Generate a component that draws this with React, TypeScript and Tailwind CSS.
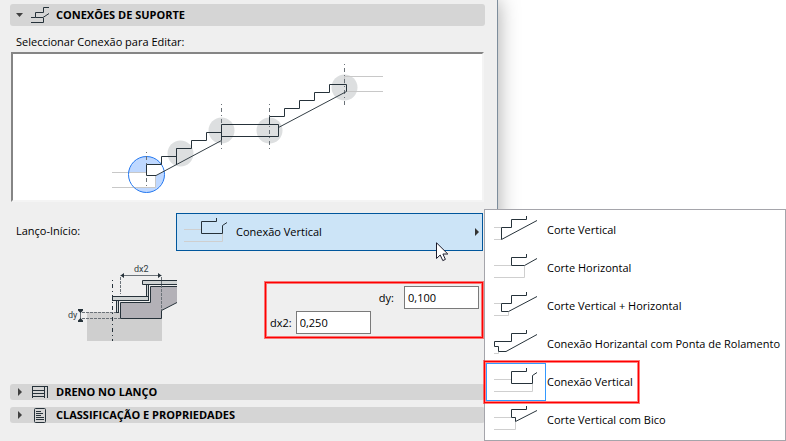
import React, { useState } from "react";

type Connection = {
  id: string;
  label: string;
  line: string;
  slab: string;
};

// Desenhos das conexões, todos numa grelha de 60x38
const connections: Connection[] = [
  {
    id: "vertical-cut",
    label: "Corte Vertical",
    line: "M40.5 5V8.5H25.5V16.5H15.5V28.5L51 9.5",
    slab: "M8 16.5H15M8 28.5H15",
  },
  {
    id: "horizontal-cut",
    label: "Corte Horizontal",
    line: "M40.5 5V8.5H25.5V16.5H38.5L51 9.5",
    slab: "M8 16.5H25M8 28.5H38.5V17",
  },
  {
    id: "vertical-horizontal-cut",
    label: "Corte Vertical + Horizontal",
    line: "M40.5 5V8.5H25.5V16.5H15.5V24.5H22.5L51 9.5",
    slab: "M8 16.5H15M8 28.5H22.5V25",
  },
  {
    id: "horizontal-nosing",
    label: "Conexão Horizantal com Ponta de Rolamento",
    line: "M40.5 5V8.5H25.5V16.5H8.5V21.5H12.5V26.5H20L51 9.5",
    slab: "M8 28.5H12.5V27",
  },
  {
    id: "vertical-connection",
    label: "Conexão Vertical",
    line: "M40.5 5V8.5H25.5V20.5H46.5V12.5L51 9.5",
    slab: "M8 16.5H25M8 28.5H46.5V21",
  },
  {
    id: "vertical-cut-nosing",
    label: "Corte Vertical com Bico",
    line: "M40.5 5V8.5H25.5V16.5H29.5V20.5L51 9.5",
    slab: "M8 16.5H25M8 28.5H29.5V21",
  },
];

const ConnectionIcon: React.FC<{ item: Connection }> = ({ item }) => (
  <svg width="60" height="38" viewBox="0 0 60 38" fill="none" className="shrink-0">
    <path d={item.slab} stroke="#cfcfcf" />
    <path d={item.line} stroke="#26323a" />
  </svg>
);

const SectionHeader: React.FC<{
  title: string;
  open?: boolean;
  tall?: boolean;
  icon: React.ReactNode;
}> = ({ title, open = false, tall = false, icon }) => (
  <button
    type="button"
    aria-expanded={open}
    className={`flex w-full items-center rounded-[3px] bg-[#d5d5d5] pl-1.5 text-left text-[11px] font-bold leading-4 ${
      tall ? "h-[22px]" : "h-4"
    }`}
  >
    <svg width="8" height="8" viewBox="0 0 8 8" fill="#404040" className="shrink-0">
      <path d={open ? "M0 2H7L3.5 6Z" : "M2 0L6 4L2 8Z"} />
    </svg>
    <span className="flex w-8 shrink-0 justify-center">{icon}</span>
    {title}
  </button>
);

const StairIcon = () => (
  <svg width="18" height="16" viewBox="0 0 18 16" fill="none" stroke="#26323a">
    <path d="M18 .5H12.5V5.5H4.5V10.5H12L18 6.5M0 10.5H4.5M0 15.5H12.5V11" />
  </svg>
);

const TreadIcon = () => (
  <svg width="16" height="12" viewBox="0 0 16 12" fill="none" stroke="#26323a">
    <path d="M.5 0V12M12.5 0V12M15.5 0V12M0 .5H16M0 4.5H12M0 7.5H12M0 10.5H12" />
  </svg>
);

const DocumentIcon = () => (
  <svg width="12" height="15" viewBox="0 0 12 15" fill="none" stroke="#26323a">
    <rect x=".5" y=".5" width="11" height="14" rx="1" />
    <path d="M2 3.5H7M2 5.5H9M2 7.5H7M2 9.5H10M2 11.5H10" />
  </svg>
);

const StairDiagram = () => (
  <svg width="271" height="146" viewBox="0 0 271 146" fill="none">
    <circle cx="34.5" cy="120.5" r="18" fill="#bfd8ff" />
    <path d="M0 118.5H34.5V110.5H49.5V102.5H60V113L44 121.5H43V133.5H0Z" fill="#fff" />
    <g fill="#dddfe0">
      <circle cx="68.5" cy="99.5" r="13" />
      <circle cx="109.5" cy="76.5" r="13" />
      <circle cx="157.5" cy="76.5" r="13" />
      <circle cx="232.5" cy="33.5" r="13" />
    </g>
    <path
      d="M0 118.5H34M0 133.5H43.5V122M271 22.5H232.5V30M271 37.5H235"
      stroke="#c8c8c8"
    />
    <circle cx="34.5" cy="120.5" r="18" stroke="#2478f0" />
    <path
      d="M34.5 98V135M109.5 50V97M157.5 50V97M232.5 10V51"
      stroke="#6b7278"
      strokeDasharray="1 3 4 3"
    />
    <path d="M44 121.5L109.5 86.5M166.5 73.5L234.5 37.5" stroke="#333e45" />
    <g stroke="#26323a">
      <path d="M44 121.5H34.5V110.5H49.5V102.5H64.5V94.5H79.5V86.5H94.5V78.5H109.5M64.5 94.5V110.5" />
      <path d="M109.5 86.5V70.5H166.5V82.5H109.5" />
      <path d="M157.5 70.5V62.5H172.5V54.5H187.5V46.5H202.5V38.5H217.5V30.5H234.5V37.5" />
    </g>
  </svg>
);

const SectionDiagram = () => (
  <svg width="112" height="79" viewBox="0 0 112 79" fill="none">
    <rect x="21" y="50" width="75" height="29" fill="#cfcfcf" />
    <path
      d="M111 24.5H84.5V40.5H54.5V56.5H95.5V48.5L111 40.5Z"
      fill="#b3b1b7"
    />
    <path d="M111 24.5H84.5V40.5H54.5V56.5H95.5V48.5L111 40.5" stroke="#26323a" />
    <g fill="#d0d4d4" stroke="#26323a">
      <rect x="50.5" y="38.5" width="2" height="12" />
      <rect x="80.5" y="22.5" width="2" height="12" />
      <rect x="46.5" y="34.5" width="36" height="4" />
      <path d="M111 18.5H76.5V22.5H111" />
    </g>
    <path d="M54.5 15V32M95.5 15V48M16 50.5H50M16 56.5H54" stroke="#6b7278" strokeDasharray="3 1" />
    <path d="M46.5 18V79" stroke="#26323a" strokeDasharray="1 3 4 3" />
    <path d="M54.5 13.5H95.5M14.5 50V57" stroke="#6b7278" />
    <path
      d="M54.5 13.5L58 11V16ZM95.5 13.5L92 11V16ZM12 47H17V48.5L14.5 51L12 48.5ZM12 60H17V58.5L14.5 56L12 58.5Z"
      fill="#26323a"
    />
    <g fill="#333e45" fontFamily="Roboto, sans-serif" fontSize="9">
      <text x="68" y="10">dx2</text>
      <text x="2" y="56">dy</text>
    </g>
  </svg>
);

const App: React.FC = () => {
  const [selectedId, setSelectedId] = useState("vertical-connection");
  const [dy, setDy] = useState("0,100");
  const [dx2, setDx2] = useState("0,250");

  const selected = connections.find((c) => c.id === selectedId) ?? connections[0];

  return (
    <div className="flex min-h-screen overflow-hidden bg-white font-['Open_Sans',sans-serif] text-[11px] leading-4 text-black">
      <main className="relative flex-1 border-r border-[#7d8d9c] bg-[#efefef] pt-1 pr-3 pl-2.5 shadow-[0_0_20px_rgba(0,0,0,0.35)]">
        <SectionHeader title="CONEXÕES DE SUPORTE" open tall icon={<StairIcon />} />

        <h2 className="mt-2 pl-1.5">Seleccionar Conexão para Editar:</h2>
        <div className="mx-px mt-0.5 flex h-[150px] justify-center border-2 border-t-[#858585] border-r-[#f4f4f4] border-b-[#f4f4f4] border-l-[#858585] bg-white">
          <StairDiagram />
        </div>

        {/* Conexão selecionada */}
        <div className="mt-[11px] flex pr-0.5 pl-1.5">
          <span id="flight-start" className="w-40 shrink-0 pt-2.5">
            Lanço-Início:
          </span>
          <div className="relative flex-1">
            <button
              type="button"
              aria-haspopup="menu"
              aria-labelledby="flight-start"
              className="flex h-[38px] w-full items-center bg-[#cce4f7] pr-1 text-left inset-ring inset-ring-[#00569c]"
            >
              <ConnectionIcon item={selected} />
              <span className="flex-1">{selected.label}</span>
              <svg width="4" height="8" viewBox="0 0 4 8" fill="#333">
                <path d="M0 0L4 4L0 8Z" />
              </svg>
            </button>

            {/* Ponteiro */}
            <svg
              width="13"
              height="20"
              viewBox="0 0 13 20"
              className="absolute top-[29px] right-[34px]"
            >
              <path
                d="M.5 .8V16.5L4.2 13L6.8 18.6L9.4 17.4L6.9 12H11.8Z"
                fill="#fff"
                stroke="#1c1c2c"
              />
            </svg>

            {/* Menu */}
            <div
              role="menu"
              className="absolute -top-1 left-full z-10 ml-px w-[302px] border border-[#a5a5ab] bg-white p-px"
            >
              {connections.map((item) => (
                <button
                  key={item.id}
                  type="button"
                  role="menuitemradio"
                  aria-checked={item.id === selectedId}
                  onClick={() => setSelectedId(item.id)}
                  className="relative flex h-[38px] w-full items-center gap-px text-left whitespace-nowrap"
                >
                  <span className={item.id === selectedId ? "inset-ring inset-ring-[#3399ff]" : ""}>
                    <ConnectionIcon item={item} />
                  </span>
                  {item.label}
                  {item.id === selectedId && (
                    <span className="absolute -top-0.5 -left-0.5 h-[42px] w-[155px] border border-[#ff0000] ring ring-[#ff0000]/50 inset-ring inset-ring-[#ff0000]/50" />
                  )}
                </button>
              ))}
            </div>
          </div>
        </div>

        {/* Dimensões */}
        <div className="mt-[11px] flex items-start justify-between pr-0.5 pl-14">
          <SectionDiagram />
          <div className="mt-5 flex w-[218px] flex-col gap-0.5 border border-[#ff0000] p-[3px] ring ring-[#ff0000]/50 inset-ring inset-ring-[#ff0000]/50">
            <div className="flex items-center justify-end gap-2.5">
              <label htmlFor="dy">dy:</label>
              <input
                id="dy"
                value={dy}
                onChange={(e) => setDy(e.target.value)}
                className="h-[23px] w-[75px] border border-[#7a7a7a] bg-white px-[3px]"
              />
            </div>
            <div className="flex items-center gap-1">
              <label htmlFor="dx2" className="pl-px">dx2:</label>
              <input
                id="dx2"
                value={dx2}
                onChange={(e) => setDx2(e.target.value)}
                className="h-[23px] w-[75px] border border-[#7a7a7a] bg-white px-[3px]"
              />
            </div>
          </div>
        </div>

        <div className="mt-[43px] flex flex-col gap-[7px]">
          <SectionHeader title="DRENO NO LANÇO" icon={<TreadIcon />} />
          <SectionHeader title="CLASSIFICAÇÃO E PROPRIEDADES" icon={<DocumentIcon />} />
        </div>
      </main>
      <div className="w-72 shrink-0" />
    </div>
  );
};

export default App;
